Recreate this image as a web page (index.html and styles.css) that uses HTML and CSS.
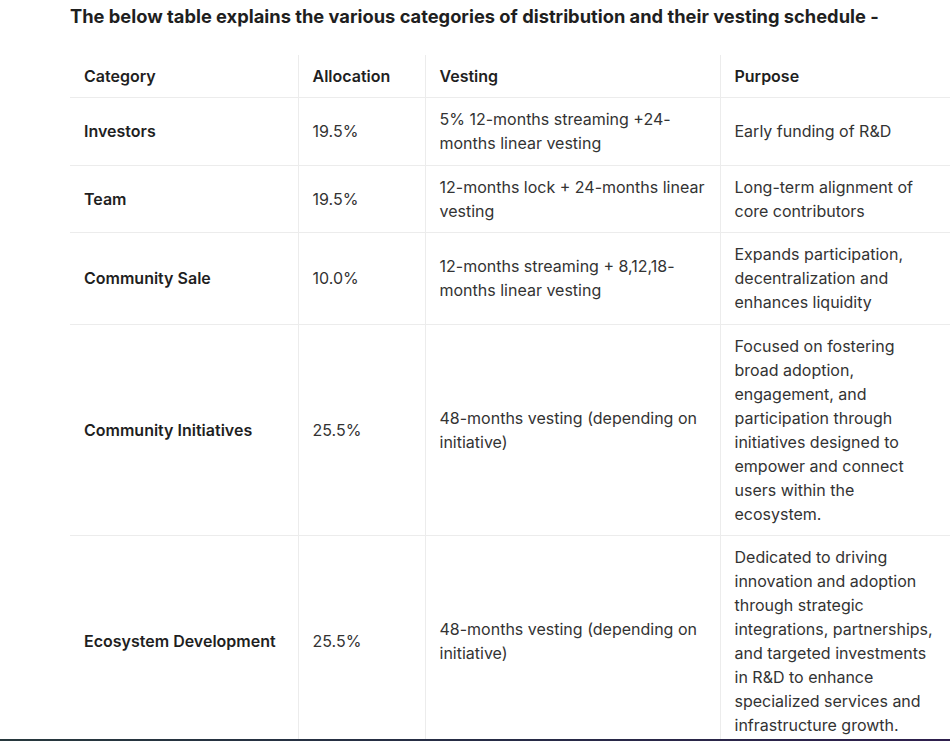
FILE: index.html
```html
<!DOCTYPE html>
<html>
<head>
<meta charset="utf-8">
<link rel="stylesheet" href="styles.css">
</head>
<body>
<div class="page">
  <h2 class="title">The below table explains the various categories of distribution and their vesting schedule -</h2>
  <table class="dist">
    <colgroup>
      <col class="c1"><col class="c2"><col class="c3"><col class="c4">
    </colgroup>
    <thead>
      <tr><th>Category</th><th>Allocation</th><th>Vesting</th><th>Purpose</th></tr>
    </thead>
    <tbody>
      <tr><td class="cat">Investors</td><td>19.5%</td><td>5% 12-months streaming +24-months linear vesting</td><td>Early funding of R&amp;D</td></tr>
      <tr><td class="cat">Team</td><td>19.5%</td><td>12-months lock + 24-months linear vesting</td><td>Long-term alignment of core contributors</td></tr>
      <tr><td class="cat">Community Sale</td><td>10.0%</td><td>12-months streaming + 8,12,18-months linear vesting</td><td>Expands participation, decentralization and enhances liquidity</td></tr>
      <tr><td class="cat">Community Initiatives</td><td>25.5%</td><td>48-months vesting (depending on initiative)</td><td>Focused on fostering broad adoption, engagement, and participation through initiatives designed to empower and connect users within the ecosystem.</td></tr>
      <tr><td class="cat">Ecosystem Development</td><td>25.5%</td><td>48-months vesting (depending on initiative)</td><td>Dedicated to driving innovation and adoption through strategic integrations, partnerships, and targeted investments in R&amp;D to enhance specialized services and infrastructure growth.</td></tr>
    </tbody>
  </table>
</div>
<div class="bottombar"></div>
</body>
</html>
```
FILE: styles.css
```css
html, body {
  margin: 0;
  padding: 0;
  background: #ffffff;
}
body {
  width: 950px;
  height: 741px;
  overflow: hidden;
  position: relative;
  font-family: Inter, "Noto Sans", sans-serif;
  color: #333333;
}
.page {
  padding: 0 0 0 70px;
}
.title {
  margin: 0;
  padding-top: 4px;
  font-size: 18.3px;
  line-height: 24px;
  font-weight: 700;
  color: #1f1f1f;
  white-space: nowrap;
}
.dist {
  margin-top: 27px;
  border-collapse: collapse;
  table-layout: fixed;
  width: 882px;
  font-size: 16px;
  line-height: 24px;
}
.c1 { width: 228px; }
.c2 { width: 127px; }
.c3 { width: 295px; }
.c4 { width: 232px; }
.dist th, .dist td {
  text-align: left;
  vertical-align: middle;
  padding: 9.5px 14px 9.5px 14px;
  border-bottom: 1px solid #ececec;
  border-left: 1px solid #ececec;
}
.dist td {
  padding-top: 9.25px;
  padding-bottom: 9.25px;
}
.dist th:first-child, .dist td:first-child {
  border-left: none;
}
.dist th {
  font-weight: 600;
  color: #1f1f1f;
  padding-top: 9px;
  padding-bottom: 9px;
}
.dist td.cat {
  font-weight: 600;
  color: #1f1f1f;
}
.bottombar {
  position: absolute;
  left: 0;
  right: 0;
  bottom: 0;
  height: 2px;
  background: linear-gradient(90deg, #27383d 0%, #262c45 50%, #2e1f4d 100%);
}
```
